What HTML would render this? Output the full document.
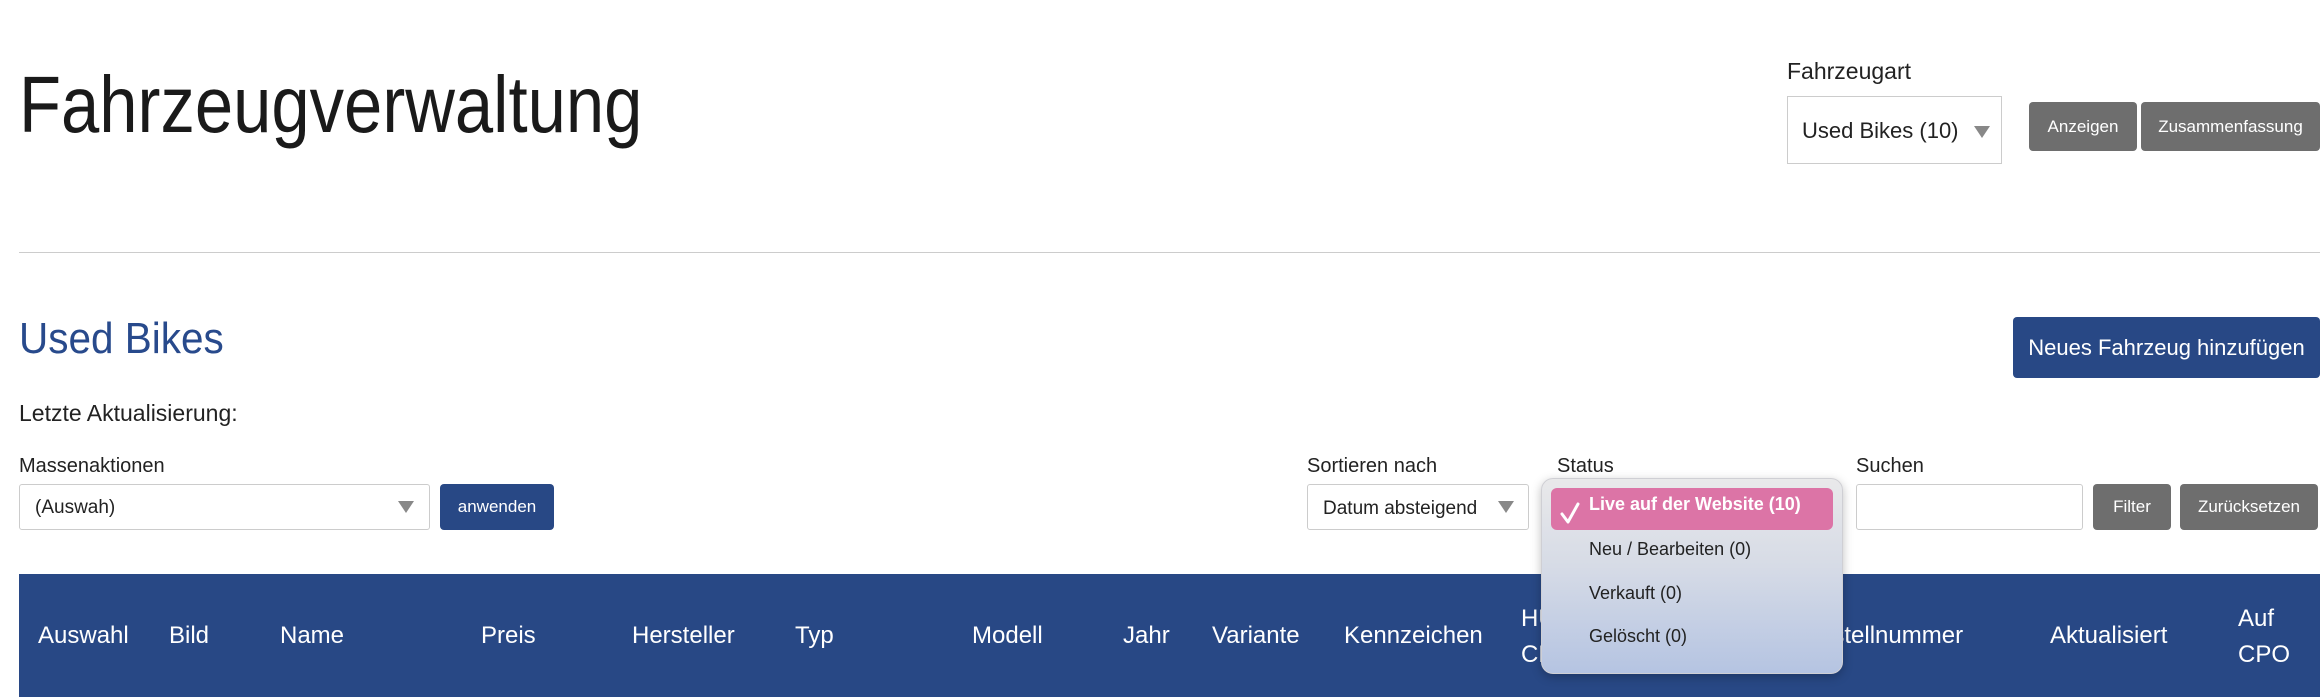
<!DOCTYPE html>
<html><head><meta charset="utf-8"><style>
*{margin:0;padding:0;box-sizing:border-box}
body{width:2320px;height:698px;background:#fff;font-family:"Liberation Sans",sans-serif;color:#222;position:relative;overflow:hidden}
.a{position:absolute;white-space:nowrap}
.lbl{font-size:20px;color:#222}
.sel{position:absolute;border:1px solid #ccc;border-radius:3px;background:#fff;font-size:19px;color:#222}
.tri{position:absolute;width:0;height:0;border-left:8px solid transparent;border-right:8px solid transparent;border-top:12px solid #888}
.btn{position:absolute;border-radius:4px;color:#fff;font-size:17px;display:flex;align-items:center;justify-content:center}
.g{background:#6e6e6e}.b{background:#284885}
.th{position:absolute;color:#fff;font-size:24px;white-space:nowrap}
</style></head><body>
<div class="a" style="left:19px;top:60px;font-size:80px;line-height:90px;transform:scaleX(0.86);transform-origin:left top;color:#1a1a1a">Fahrzeugverwaltung</div>

<div class="a lbl" style="left:1787px;top:58px;font-size:23px">Fahrzeugart</div>
<div class="sel" style="left:1787px;top:96px;width:215px;height:68px;border-radius:0">
 <span class="a" style="left:14px;top:21px;font-size:22px">Used Bikes (10)</span>
 <div class="tri" style="left:186px;top:29px"></div></div>
<div class="btn g" style="left:2029px;top:102px;width:108px;height:49px">Anzeigen</div>
<div class="btn g" style="left:2141px;top:102px;width:179px;height:49px">Zusammenfassung</div>

<div class="a" style="left:19px;top:252px;width:2301px;height:1px;background:#ccc"></div>

<div class="a" style="left:19px;top:314px;font-size:44px;color:#284a8c;transform:scaleX(0.92);transform-origin:left top">Used Bikes</div>
<div class="btn b" style="left:2013px;top:317px;width:307px;height:61px;font-size:22px">Neues Fahrzeug hinzufügen</div>

<div class="a" style="left:19px;top:400px;font-size:23px">Letzte Aktualisierung:</div>

<div class="a lbl" style="left:19px;top:455px">Massenaktionen</div>
<div class="sel" style="left:19px;top:484px;width:411px;height:46px"><span class="a" style="left:15px;top:12px">(Auswah)</span><div class="tri" style="left:378px;top:16px"></div></div>
<div class="btn b" style="left:440px;top:484px;width:114px;height:46px">anwenden</div>

<div class="a lbl" style="left:1307px;top:455px">Sortieren nach</div>
<div class="sel" style="left:1307px;top:484px;width:222px;height:46px"><span class="a" style="left:15px;top:13px">Datum absteigend</span><div class="tri" style="left:190px;top:16px"></div></div>
<div class="a lbl" style="left:1557px;top:455px">Status</div>
<div class="a lbl" style="left:1856px;top:455px">Suchen</div>
<div class="sel" style="left:1856px;top:484px;width:227px;height:46px"></div>
<div class="btn g" style="left:2093px;top:484px;width:78px;height:46px">Filter</div>
<div class="btn g" style="left:2180px;top:484px;width:138px;height:46px">Zurücksetzen</div>

<div class="a" style="left:19px;top:574px;width:2301px;height:123px;background:#284885"></div>
<div class="th" style="left:38px;top:622px">Auswahl</div>
<div class="th" style="left:169px;top:622px">Bild</div>
<div class="th" style="left:280px;top:622px">Name</div>
<div class="th" style="left:481px;top:622px">Preis</div>
<div class="th" style="left:632px;top:622px">Hersteller</div>
<div class="th" style="left:795px;top:622px">Typ</div>
<div class="th" style="left:972px;top:622px">Modell</div>
<div class="th" style="left:1123px;top:622px">Jahr</div>
<div class="th" style="left:1212px;top:622px">Variante</div>
<div class="th" style="left:1344px;top:622px">Kennzeichen</div>
<div class="th" style="left:1521px;top:601px;line-height:36px">HU<br>CPO</div>
<div class="th" style="left:1803px;top:622px">Bestellnummer</div>
<div class="th" style="left:2050px;top:622px">Aktualisiert</div>
<div class="th" style="left:2238px;top:601px;line-height:36px">Auf<br>CPO</div>

<div class="a" style="left:1541px;top:478px;width:302px;height:196px;border-radius:12px;background:linear-gradient(#e9e9ea,#d6dbe6 45%,#b5c4e2);box-shadow:0 3px 10px rgba(0,0,0,.25);border:1px solid #cfcfd4">
 <div class="a" style="left:9px;top:9px;width:282px;height:42px;border-radius:6px;background:#dc74a6"></div>
 <svg class="a" style="left:17px;top:22px" width="22" height="24" viewBox="0 0 22 24"><path d="M3 13 L9 21 L19 3" fill="none" stroke="#fff" stroke-width="3" stroke-linecap="round" stroke-linejoin="round"/></svg>
 <div class="a" style="left:47px;top:15px;font-size:18px;font-weight:bold;color:#fff">Live auf der Website (10)</div>
 <div class="a" style="left:47px;top:60px;font-size:18px;color:#222">Neu / Bearbeiten (0)</div>
 <div class="a" style="left:47px;top:104px;font-size:18px;color:#222">Verkauft (0)</div>
 <div class="a" style="left:47px;top:147px;font-size:18px;color:#222">Gelöscht (0)</div>
</div>
</body></html>
